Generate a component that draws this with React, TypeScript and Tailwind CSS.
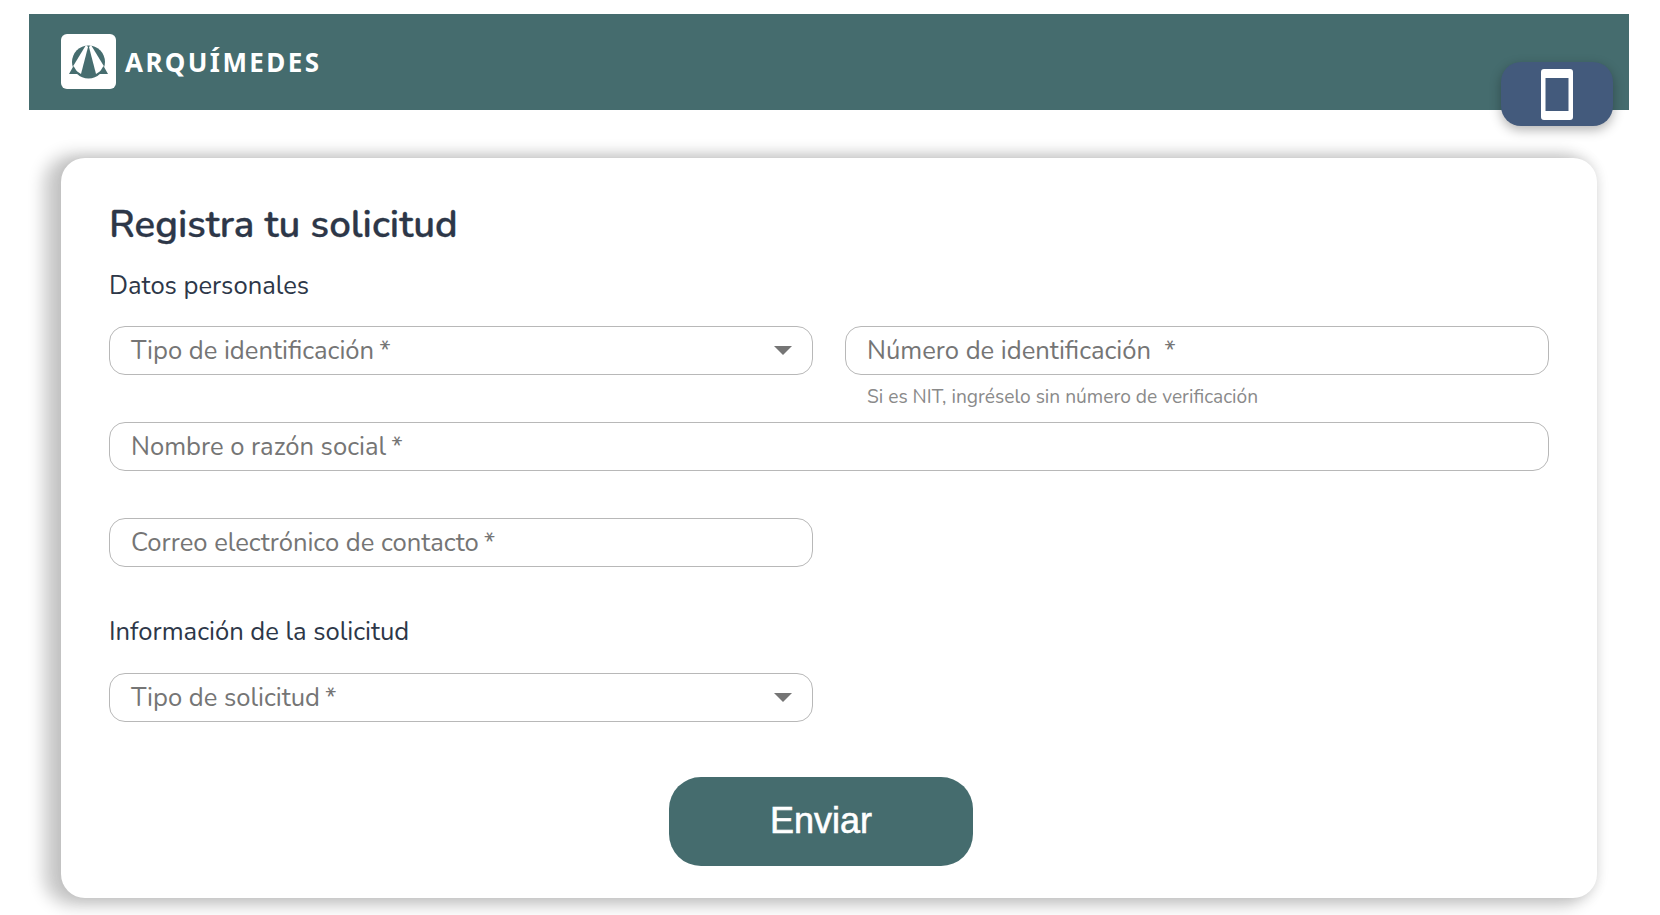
const fontFamily = "font-['Nunito','Noto_Sans','Liberation_Sans',sans-serif]";

function Logo() {
  return (
    <div className="flex h-[55px] w-[55px] items-center justify-center rounded-[6px] bg-white">
      <svg width="55" height="55" viewBox="0 0 55 55">
        <circle cx="27.5" cy="28" r="16.5" fill="#466d6f" />
        <path d="M25 11 L11 34 L20 40 L27 13 Z" fill="#fff" />
        <path d="M30 11 L44 34 L35 40 L28 13 Z" fill="#fff" />
        <path d="M8 40 L12.500 32 L17.500 40 Z M47 40 L42.500 32 L37.500 40 Z" fill="#466d6f" />
      </svg>
    </div>
  );
}

function PhoneIcon() {
  return (
    <svg width="32" height="51" viewBox="0 0 32 51">
      <path
        fillRule="evenodd"
        d="M3 0 H29 A3 3 0 0 1 32 3 V48 A3 3 0 0 1 29 51 H3 A3 3 0 0 1 0 48 V3 A3 3 0 0 1 3 0 Z M4.500 9 V42 H27.500 V9 Z"
        fill="#fff"
      />
    </svg>
  );
}

function Field({ label, select }: { label: string; select?: boolean }) {
  return (
    <div className="flex h-[49px] w-full items-center justify-between rounded-[16px] border border-[#b8b8b8] bg-white pl-[21px] pr-[20px]">
      <span className="whitespace-pre text-[25.6px] leading-none text-[#757575]">{label}</span>
      {select && (
        <svg width="18" height="9" viewBox="0 0 18 9" className="shrink-0">
          <path d="M0 0 H18 L9 9 Z" fill="#757575" />
        </svg>
      )}
    </div>
  );
}

export default function App() {
  return (
    <div className={`min-h-[915px] overflow-hidden bg-white px-[29px] pt-[14px] ${fontFamily}`}>
      <header className="relative flex h-[96px] w-[1600px] items-center bg-[#456c6e] pl-[32px] pb-[1px]">
        <Logo />
        <span className="ml-[9px] font-['Noto_Sans',sans-serif] text-[26px] font-bold leading-none tracking-[2.4px] text-white">ARQUÍMEDES</span>
        <button className="absolute left-[1472px] top-[48px] flex h-[64px] w-[112px] items-center justify-center rounded-[20px] bg-[#435a7c] shadow-[0_4px_12px_rgba(0,0,0,0.3)]">
          <PhoneIcon />
        </button>
      </header>

      <main className="ml-[32px] mt-[48px] flex h-[740px] w-[1536px] flex-col rounded-[24px] bg-white px-[48px] pt-[44px] shadow-[-12px_2px_16px_6px_rgba(0,0,0,0.2),0_0_14px_rgba(0,0,0,0.1)]">
        <h1 className="text-[38.4px] font-semibold leading-[46px] text-[#2d3748] [-webkit-text-stroke:0.3px_#2d3748]">Registra tu solicitud</h1>
        <h2 className="mt-[23px] text-[25.6px] leading-[30px] text-[#2d3748]">Datos personales</h2>

        <div className="mt-[25px] grid grid-cols-2 gap-x-[32px]">
          <Field label={'Tipo de identificación\u2009*'} select />
          <Field label="Número de identificación  *" />
        </div>
        <p className="ml-[758px] mt-[11px] h-[23px] text-[19.2px] leading-[23px] text-[#8a8a8a]">Si es NIT, ingréselo sin número de verificación</p>

        <div className="mt-[13px]">
          <Field label={'Nombre o razón social\u2009*'} />
        </div>
        <div className="mt-[47px] w-[704px]">
          <Field label={'Correo electrónico de contacto\u2009*'} />
        </div>

        <h2 className="mt-[50px] text-[25.6px] leading-[30px] text-[#2d3748]">Información de la solicitud</h2>
        <div className="mt-[26px] w-[704px]">
          <Field label={'Tipo de solicitud\u2009*'} select />
        </div>

        <button className="ml-[560px] mt-[55px] flex h-[89px] w-[304px] items-center justify-center rounded-[32px] bg-[#456c6e] pb-[2px] font-['Liberation_Sans',sans-serif] text-[36px] text-white [-webkit-text-stroke:0.6px_white]">
          Enviar
        </button>
      </main>
    </div>
  );
}
